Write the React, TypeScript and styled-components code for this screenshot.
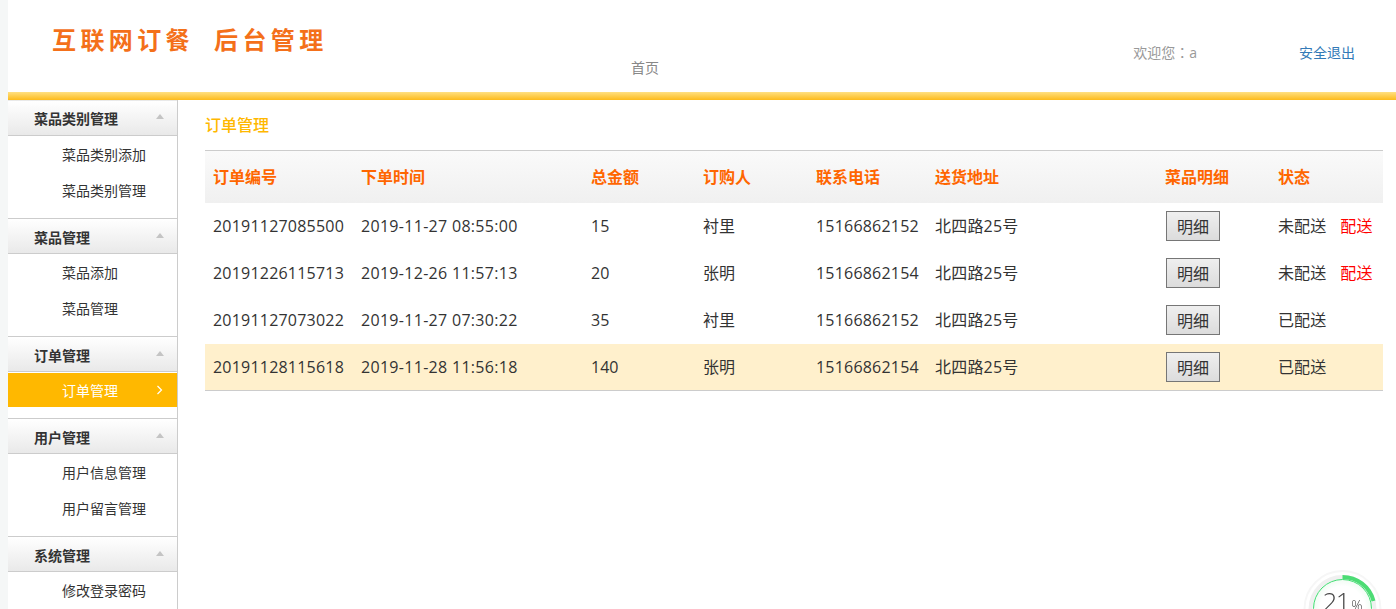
import React from 'react';
import styled, { createGlobalStyle } from 'styled-components';

const GlobalStyle = createGlobalStyle`
  html, body {
    margin: 0;
    height: 100%;
    overflow: hidden;
    background: #f5f7f7;
  }
  body {
    font-family: "Open Sans", "Noto Sans CJK SC", sans-serif;
    font-size: 14px;
    color: #333;
  }
`;

const Page = styled.div`
  height: 609px;
  margin-left: 8px;
  background: #fff;
  display: flex;
  flex-direction: column;
  overflow: hidden;
`;

const Header = styled.header`
  height: 92px;
  flex: none;
  display: flex;
  position: relative;
`;

const Logo = styled.div`
  width: 440px;
  padding: 23px 0 0 44px;
  box-sizing: border-box;
  display: flex;
  gap: 20px;
  font-family: "Noto Sans CJK SC", sans-serif;
  font-size: 24px;
  font-weight: 700;
  line-height: 32px;
  letter-spacing: 4.4px;
  color: #f4701a;
`;

const HomeNav = styled.a`
  margin: 58px 0 0 183px;
  font-size: 14px;
  line-height: 20px;
  height: 20px;
  color: #888;
`;

const UserBar = styled.div`
  margin-left: auto;
  padding: 42px 41px 0 0;
  display: flex;
  gap: 102px;
  font-size: 14px;
  line-height: 20px;
`;

const Welcome = styled.span`
  color: #999;
`;

const Colon = styled.span`
  font-family: "Noto Sans CJK TC", sans-serif;
`;

const Logout = styled.a`
  color: #337ab7;
  margin-top: 1px;
`;

const GoldBar = styled.div`
  height: 8px;
  flex: none;
  background: linear-gradient(#ffe082, #fdbb1c);
`;

const Body = styled.div`
  flex: 1;
  display: flex;
  min-height: 0;
`;

const Sidebar = styled.aside`
  width: 170px;
  box-sizing: border-box;
  flex: none;
  border-right: 1px solid #ccc;
`;

const Group = styled.section`
  padding-bottom: 10px;
`;

const GroupHead = styled.div<{ $first?: boolean }>`
  height: 36px;
  box-sizing: border-box;
  padding: ${p => (p.$first ? '0' : '2px')} 0 0 26px;
  display: flex;
  align-items: center;
  justify-content: space-between;
  border-top: 1px solid ${p => (p.$first ? 'transparent' : '#ccc')};
  border-bottom: 1px solid #ccc;
  background: linear-gradient(#fff, #e9e9e9);
  font-size: 14px;
  font-weight: 700;
  color: #333;
`;

const Caret = styled.i`
  width: 0;
  height: 0;
  margin: 0 13px 4px 0;
  border-left: 4.5px solid transparent;
  border-right: 4.5px solid transparent;
  border-bottom: 5px solid #c4c4c4;
`;

const Item = styled.a<{ $active?: boolean }>`
  height: 36px;
  box-sizing: border-box;
  padding: 0 14px 0 54px;
  display: flex;
  align-items: center;
  justify-content: space-between;
  font-size: 14px;
  color: ${p => (p.$active ? '#fff' : '#333')};
  ${p => p.$active && 'background: #ffb800; background-clip: padding-box; border-top: 1px solid #fff; border-bottom: 1px solid #fff;'}
`;

const Main = styled.main`
  flex: 1;
  padding: 0 13px 0 27px;
  min-width: 0;
`;

const Title = styled.h2`
  margin: 0;
  height: 50px;
  font-size: 16px;
  font-weight: 500;
  line-height: 50px;
  color: #ffb800;
`;

const Table = styled.table`
  width: 100%;
  table-layout: fixed;
  border-collapse: collapse;
  font-size: 16px;
  border-top: 1px solid #ccc;
  border-bottom: 1px solid #ccc;
`;

const HeadRow = styled.tr`
  background: linear-gradient(#fafafa, #f0f0f0);
`;

const Th = styled.th`
  height: 52px;
  box-sizing: border-box;
  padding: 0 8px 2px;
  text-align: left;
  font-weight: 700;
  color: #ff6600;
`;

const Row = styled.tr<{ $hot?: boolean }>`
  background: ${p => (p.$hot ? '#fff0cc' : 'transparent')};
`;

const Td = styled.td<{ $track?: number; $cjk?: boolean }>`
  height: 47px;
  box-sizing: border-box;
  padding: 0 8px ${p => (p.$cjk ? '2px' : '0')};
  color: #333;
  white-space: nowrap;
  letter-spacing: ${p => p.$track ?? 0}px;
`;

const DetailButton = styled.button`
  width: 54px;
  height: 30px;
  margin-left: 1px;
  padding: 0;
  font: inherit;
  color: #333;
  border: 1px solid #767676;
  background: linear-gradient(#efefef, #dcdcdc);
`;

const DeliverLink = styled.a`
  margin-left: 14px;
  color: #ff0000;
`;

const SpeedRing = styled.svg`
  position: fixed;
  left: 1302px;
  top: 569px;
`;

const Speed = styled.div`
  position: fixed;
  left: 1313px;
  top: 579px;
  width: 59px;
  height: 59px;
  box-sizing: border-box;
  border-radius: 50%;
  border: 1px solid #3fdc70;
  background: radial-gradient(circle, #fff 55%, #d8f7e0);
  text-align: center;
  font-size: 26px;
  font-weight: 300;
  line-height: 42px;
  letter-spacing: -1.5px;
  color: #444;
`;

const SpeedUnit = styled.small`
  font-size: 14px;
  letter-spacing: 0;
  margin-left: 2px;
`;

const menu = [
  { title: '菜品类别管理', items: ['菜品类别添加', '菜品类别管理'] },
  { title: '菜品管理', items: ['菜品添加', '菜品管理'] },
  { title: '订单管理', items: ['订单管理'], active: '订单管理' },
  { title: '用户管理', items: ['用户信息管理', '用户留言管理'] },
  { title: '系统管理', items: ['修改登录密码'] },
];

const columns = [
  ['订单编号', 148],
  ['下单时间', 230],
  ['总金额', 112],
  ['订购人', 113],
  ['联系电话', 119],
  ['送货地址', 230],
  ['菜品明细', 113],
  ['状态', 113],
] as const;

const orders = [
  { no: '20191127085500', time: '2019-11-27 08:55:00', total: 15, name: '衬里', tel: '15166862152', state: '未配送' },
  { no: '20191226115713', time: '2019-12-26 11:57:13', total: 20, name: '张明', tel: '15166862154', state: '未配送' },
  { no: '20191127073022', time: '2019-11-27 07:30:22', total: 35, name: '衬里', tel: '15166862152', state: '已配送' },
  { no: '20191128115618', time: '2019-11-28 11:56:18', total: 140, name: '张明', tel: '15166862154', state: '已配送', hot: true },
];

export default function App() {
  return (
    <>
      <GlobalStyle />
      <Page>
        <Header>
          <Logo>
            <span>互联网订餐</span>
            <span>后台管理</span>
          </Logo>
          <HomeNav>首页</HomeNav>
          <UserBar>
            <Welcome>
              欢迎您<Colon>：</Colon>a
            </Welcome>
            <Logout>安全退出</Logout>
          </UserBar>
        </Header>
        <GoldBar />
        <Body>
          <Sidebar>
            {menu.map((g, i) => (
              <Group key={g.title}>
                <GroupHead $first={i === 0}>
                  {g.title}
                  <Caret />
                </GroupHead>
                {g.items.map(item => (
                  <Item key={item} $active={g.active === item}>
                    {item}
                    {g.active === item && (
                      <svg width="7" height="10" viewBox="0 0 7 10">
                        <path d="M1.5 1l4 4-4 4" fill="none" stroke="#fff" strokeWidth="1.2" />
                      </svg>
                    )}
                  </Item>
                ))}
              </Group>
            ))}
          </Sidebar>
          <Main>
            <Title>订单管理</Title>
            <Table>
              <colgroup>
                {columns.map(([label, w]) => (
                  <col key={label} width={w} />
                ))}
              </colgroup>
              <thead>
                <HeadRow>
                  {columns.map(([label]) => (
                    <Th key={label}>{label}</Th>
                  ))}
                </HeadRow>
              </thead>
              <tbody>
                {orders.map(o => (
                  <Row key={o.no} $hot={o.hot}>
                    <Td $track={0.21}>{o.no}</Td>
                    <Td $track={0.3}>{o.time}</Td>
                    <Td>{o.total}</Td>
                    <Td $cjk>{o.name}</Td>
                    <Td $track={0.2}>{o.tel}</Td>
                    <Td $cjk $track={0.2}>北四路25号</Td>
                    <Td>
                      <DetailButton>明细</DetailButton>
                    </Td>
                    <Td $cjk $track={0.1}>
                      {o.state}
                      {o.state === '未配送' && <DeliverLink>配送</DeliverLink>}
                    </Td>
                  </Row>
                ))}
              </tbody>
            </Table>
          </Main>
        </Body>
      </Page>
      <SpeedRing width="94" height="40" viewBox="0 0 94 40">
        <circle cx="40.5" cy="40" r="38" fill="#fff" stroke="#f6f6f6" strokeWidth="2" />
        <circle cx="40.5" cy="40" r="32" fill="none" stroke="#f0f0f0" strokeWidth="4" />
        <path d="M40.5 8 A32 32 0 0 1 71.5 32" fill="none" stroke="#4cdc74" strokeWidth="4" />
      </SpeedRing>
      <Speed>
        21<SpeedUnit>%</SpeedUnit>
      </Speed>
    </>
  );
}
